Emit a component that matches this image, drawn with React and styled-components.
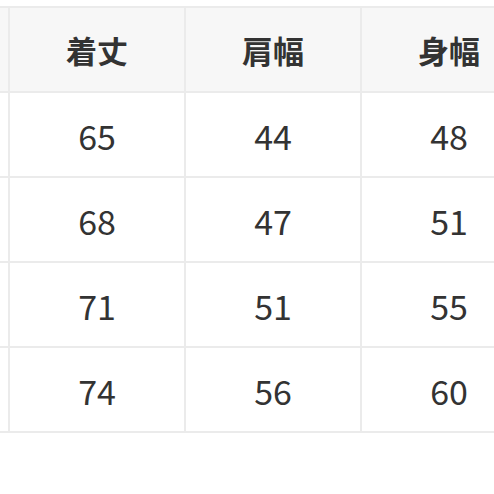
import React from "react";
import styled, { createGlobalStyle } from "styled-components";

const Global = createGlobalStyle`
  html, body { margin: 0; padding: 0; background: #fff; }
  body { font-family: "Noto Sans CJK JP", "Noto Sans", sans-serif; }
`;

const Page = styled.div`
  width: 494px;
  height: 494px;
  overflow: hidden;
  padding-top: 6px;
  box-sizing: border-box;
`;

const Table = styled.div`
  display: grid;
  grid-template-columns: 10px 176px 176px 176px;
  grid-auto-rows: 85px;
  border-top: 2px solid #ebebeb;
  width: max-content;
`;

const Cell = styled.div`
  box-sizing: border-box;
  display: flex;
  align-items: center;
  justify-content: center;
  border-right: 2px solid #ebebeb;
  border-bottom: 2px solid #ebebeb;
  background: ${(p) => (p.$head ? "#f7f7f7" : "#fff")};
  color: #333;
  font-family: "Noto Sans CJK JP", "Noto Sans", sans-serif;
  font-size: ${(p) => (p.$head ? "31px" : "34px")};
  font-weight: ${(p) => (p.$head ? 700 : 400)};
  line-height: 1;
  padding-top: ${(p) => (p.$head ? "0px" : "2px")};
`;

const header = ["着丈", "肩幅", "身幅"];
const rows = [
  ["65", "44", "48"],
  ["68", "47", "51"],
  ["71", "51", "55"],
  ["74", "56", "60"],
];

export default function App() {
  return (
    <>
      <Global />
      <Page>
        <Table>
          <Cell $head />
          {header.map((h) => (
            <Cell $head key={h}>{h}</Cell>
          ))}
          {rows.map((r, i) => (
            <React.Fragment key={i}>
              <Cell />
              {r.map((v, j) => (
                <Cell key={j}>{v}</Cell>
              ))}
            </React.Fragment>
          ))}
        </Table>
      </Page>
    </>
  );
}
